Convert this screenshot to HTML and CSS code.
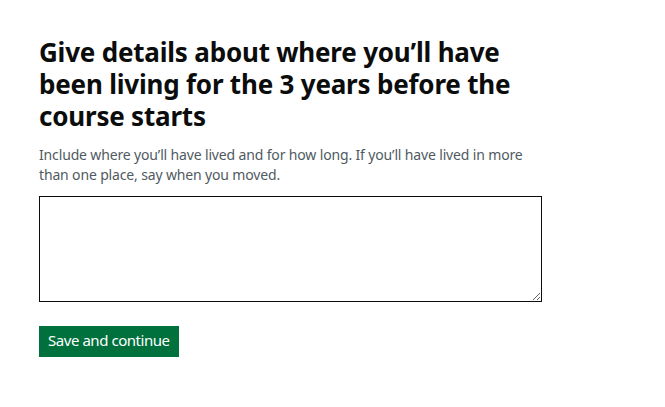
FILE: index.html
```html
<!DOCTYPE html>
<html lang="en">
<head>
<meta charset="utf-8">
<title>Where you'll have been living</title>
<link rel="stylesheet" href="styles.css">
</head>
<body>
<main class="page">
  <div class="form-group">
    <h1 class="heading"><label for="details">Give details about where you’ll have been living for the 3 years before the course starts</label></h1>
    <div class="hint">Include where you’ll have lived and for how long. If you’ll have lived in more than one place, say when you moved.</div>
    <textarea id="details" class="textarea" rows="5"></textarea>
  </div>
  <button class="button" type="submit">Save and continue</button>
</main>
</body>
</html>
```

FILE: styles.css
```css
html, body {
  margin: 0;
  padding: 0;
  background: #ffffff;
}
body {
  font-family: "Noto Sans", "Liberation Sans", sans-serif;
  color: #0b0c0c;
}
.page {
  padding: 36px 0 0 39px;
  width: 503px;
}
.form-group {
  display: flex;
  flex-direction: column;
  margin-bottom: 24px;
}
.heading {
  margin: 0 0 13px;
  font-size: 26px;
  line-height: 32px;
  font-weight: 700;
  letter-spacing: -0.2px;
  width: 500px;
}
.hint {
  color: #505a5f;
  font-size: 14px;
  line-height: 20px;
  letter-spacing: -0.15px;
  margin-bottom: 11px;
}
.textarea {
  box-sizing: border-box;
  display: block;
  width: 503px;
  height: 106px;
  margin: 0;
  border: 1px solid #0b0c0c;
  border-radius: 0;
  padding: 4px;
  font: inherit;
  resize: vertical;
}
.button {
  display: inline-block;
  box-sizing: border-box;
  height: 31px;
  padding: 0 9px 2px;
  border: 0;
  border-radius: 0;
  background: #00703c;
  color: #ffffff;
  font-family: "Noto Sans", "Liberation Sans", sans-serif;
  font-size: 15px;
  line-height: 29px;
  letter-spacing: -0.45px;
  box-shadow: 0 2px 0 #002d18;
  cursor: pointer;
}
```
